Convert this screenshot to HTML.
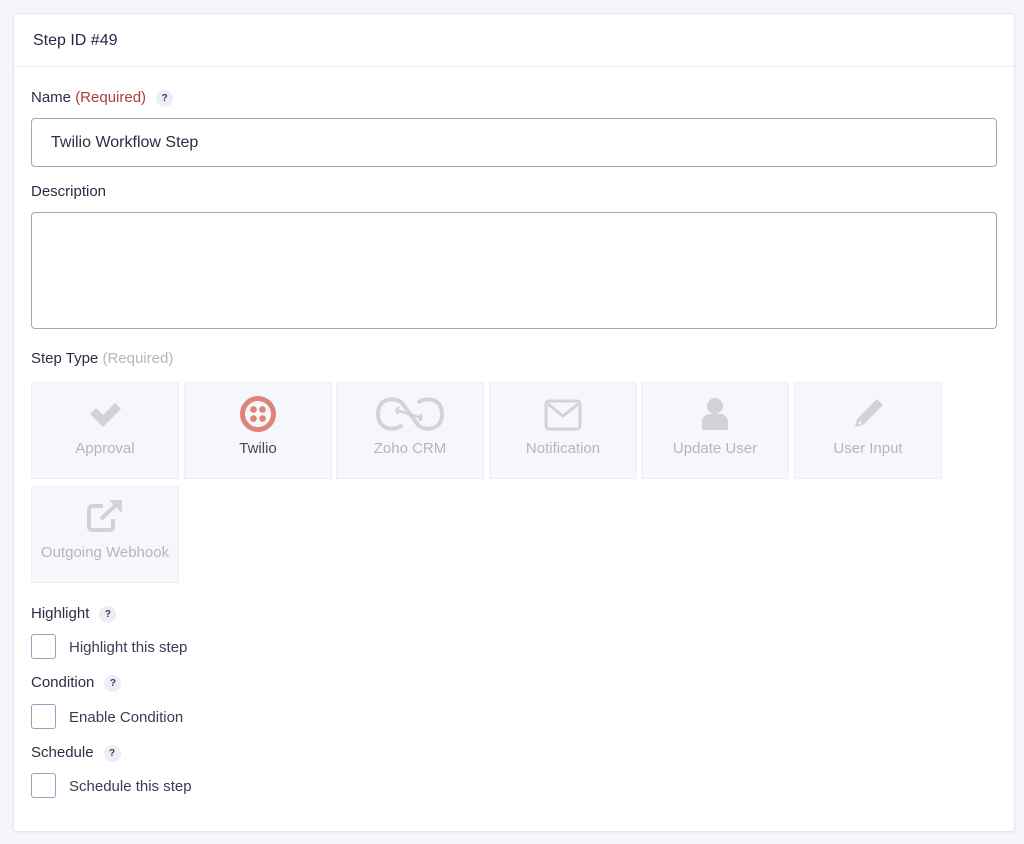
<!DOCTYPE html>
<html><head><meta charset="utf-8"><style>
*{box-sizing:border-box;margin:0;padding:0}
body{width:1024px;height:844px;background:#f5f6fa;font-family:"Liberation Sans",sans-serif;color:#242748;position:relative;overflow:hidden}
.card{position:absolute;left:13px;top:13px;width:1002px;height:819px;background:#fff;border:1px solid #e4e6ee;border-radius:3px;box-shadow:0 1px 2px rgba(0,0,0,.05)}
.hdr{height:53px;border-bottom:1px solid #eceef3;padding:18px 0 0 19px;font-size:16px}
.a{position:absolute}
.lbl{font-size:15px;color:#2b2d44}
.q{display:inline-block;width:17px;height:17px;border-radius:50%;background:#ecedf7;font-size:10px;font-weight:bold;text-align:center;line-height:17px;color:#3a3c5a;vertical-align:1px;margin-left:10px}
.inp{border:1px solid #a2a4c0;border-radius:4px;background:#fff}
.tile{position:absolute;width:148px;height:97px;background:#f6f7fb;border:1px solid #eef0f5;text-align:center;font-size:15px;color:#b5b6bd}
.tile svg{position:absolute;left:50%;transform:translateX(-50%);top:14px}
.tile span{position:absolute;left:0;right:0;top:57px}
.cb{position:absolute;width:25px;height:25px;border:1px solid #9c9ec0;border-radius:3px;background:#fff}
.cl{position:absolute;font-size:15px;color:#3a3c55}
</style></head><body>
<div class="card">
<div class="hdr">Step ID #49</div>
</div>
<div class="a lbl" style="left:31px;top:89px">Name <span style="color:#b03b3b">(Required)</span><span class="q">?</span></div>
<div class="a inp" style="left:31px;top:118px;width:966px;height:49px;padding:15px 0 0 19px;font-size:16px;color:#2b2d44">Twilio Workflow Step</div>
<div class="a lbl" style="left:31px;top:183px">Description</div>
<div class="a inp" style="left:31px;top:212px;width:966px;height:117px"></div>
<div class="a lbl" style="left:31px;top:350px">Step Type <span style="color:#b5b6bd">(Required)</span></div>

<div class="tile" style="left:31px;top:382px"><svg width="34" height="30" viewBox="0 0 34 30" style="top:18px"><path d="M2 13l6-6 7 7L27 2l6 6-18 18z" fill="#d2d3d6"/></svg><span>Approval</span></div>
<div class="tile" style="left:184px;top:382px;color:#44465a"><svg width="38" height="38" viewBox="0 0 38 38" style="top:12px"><circle cx="19" cy="19" r="15.5" fill="none" stroke="#e0817a" stroke-width="5"/><circle cx="14.5" cy="14.5" r="3.3" fill="#e0817a"/><circle cx="23.5" cy="14.5" r="3.3" fill="#e0817a"/><circle cx="14.5" cy="23.5" r="3.3" fill="#e0817a"/><circle cx="23.5" cy="23.5" r="3.3" fill="#e0817a"/></svg><span>Twilio</span></div>
<div class="tile" style="left:336px;top:382px"><svg width="72" height="38" viewBox="0 0 72 38" style="top:12px"><path d="M28 30C22 36 4 36 4 19S22 2 28 8l16 22c6 6 24 6 24-11S50 2 44 8" fill="none" stroke="#d2d3d6" stroke-width="4"/><path d="M22 15l26 8M22 15l3-3M22 15l2 4M48 23l-3 3M48 23l-2-4" stroke="#d2d3d6" stroke-width="2.5" fill="none"/></svg><span>Zoho CRM</span></div>
<div class="tile" style="left:489px;top:382px"><svg width="38" height="32" viewBox="0 0 38 32" style="top:16px"><rect x="2" y="2" width="34" height="28" rx="3" fill="none" stroke="#d2d3d6" stroke-width="3"/><path d="M4 5l15 12L34 5" fill="none" stroke="#d2d3d6" stroke-width="3"/></svg><span>Notification</span></div>
<div class="tile" style="left:641px;top:382px"><svg width="30" height="34" viewBox="0 0 30 34" style="top:14px"><circle cx="15" cy="9" r="8" fill="#d2d3d6"/><path d="M2 33v-8c0-5 4-8 8-8h10c4 0 8 3 8 8v8z" fill="#d2d3d6"/></svg><span>Update User</span></div>
<div class="tile" style="left:794px;top:382px"><svg width="34" height="34" viewBox="0 0 34 34" style="top:14px"><path d="M26 2l6 6-20 20-8 2 2-8z" fill="#d2d3d6"/><path d="M8 25l2 2" stroke="#f6f7fb" stroke-width="2"/></svg><span>User Input</span></div>
<div class="tile" style="left:31px;top:486px"><svg width="40" height="34" viewBox="0 0 40 34" style="top:12px"><path d="M18 7H7a3 3 0 00-3 3v18a3 3 0 003 3h18a3 3 0 003-3v-8" fill="none" stroke="#d2d3d6" stroke-width="4"/><path d="M16 20L32 5" stroke="#d2d3d6" stroke-width="4"/><path d="M24 1h13v13z" fill="#d2d3d6"/></svg><span>Outgoing Webhook</span></div>

<div class="a lbl" style="left:31px;top:605px">Highlight<span class="q">?</span></div>
<div class="cb" style="left:31px;top:634px"></div><div class="cl" style="left:69px;top:639px">Highlight this step</div>
<div class="a lbl" style="left:31px;top:674px">Condition<span class="q">?</span></div>
<div class="cb" style="left:31px;top:704px"></div><div class="cl" style="left:69px;top:709px">Enable Condition</div>
<div class="a lbl" style="left:31px;top:744px">Schedule<span class="q">?</span></div>
<div class="cb" style="left:31px;top:773px"></div><div class="cl" style="left:69px;top:778px">Schedule this step</div>
</body></html>
